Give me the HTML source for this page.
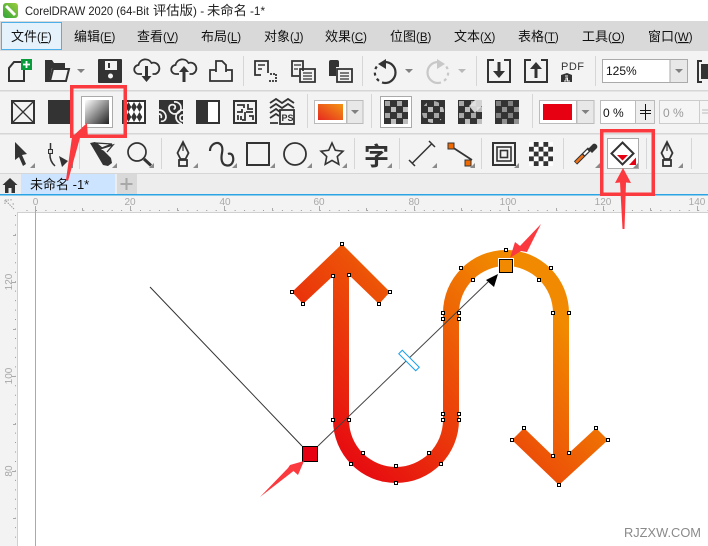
<!DOCTYPE html>
<html><head><meta charset="utf-8"><style>
html,body{margin:0;padding:0;background:#fff}
svg{display:block;position:absolute;left:0;top:0}
text{font-family:"Liberation Sans","Noto Sans CJK SC",sans-serif}
.l{font-size:11.500px}
.u{text-decoration:underline}
.h rect{width:3px;height:3px}
</style></head><body style="width:708px;height:546px;overflow:hidden;position:relative">
<svg width="708" height="546" viewBox="0 0 708 546" xmlns="http://www.w3.org/2000/svg">
<defs>
<linearGradient id="g" gradientUnits="userSpaceOnUse" x1="310" y1="454" x2="506" y2="265"><stop offset="0" stop-color="#e60012"/><stop offset="1" stop-color="#f18a00"/></linearGradient>
<linearGradient id="sw" x1="0" y1="1" x2="1" y2="0"><stop offset="0" stop-color="#e62a20"/><stop offset="1" stop-color="#f39412"/></linearGradient>
<linearGradient id="gr" x1="0" y1="0" x2="1" y2="1"><stop offset="0" stop-color="#fff"/><stop offset="1" stop-color="#222"/></linearGradient>
<linearGradient id="logo" x1="0" y1="1" x2="1" y2="0"><stop offset="0" stop-color="#2fa53a"/><stop offset="1" stop-color="#9ccc3c"/></linearGradient>
<pattern id="ck" width="12" height="12" patternUnits="userSpaceOnUse" x="384" y="100"><rect width="12" height="12" fill="#333"/><rect x="1" y="1" width="5" height="5" fill="#a8a8a8"/><rect x="7" y="7" width="5" height="5" fill="#bdbdbd"/></pattern>
<pattern id="ck2" width="12" height="12" patternUnits="userSpaceOnUse" x="421" y="100"><rect width="12" height="12" fill="#333"/><rect x="1" y="1" width="5" height="5" fill="#a8a8a8"/><rect x="7" y="7" width="5" height="5" fill="#bdbdbd"/></pattern>
<pattern id="ck3" width="12" height="12" patternUnits="userSpaceOnUse" x="458" y="100"><rect width="12" height="12" fill="#333"/><rect x="1" y="1" width="5" height="5" fill="#a8a8a8"/><rect x="7" y="7" width="5" height="5" fill="#bdbdbd"/></pattern>
<pattern id="ck4" width="12" height="12" patternUnits="userSpaceOnUse" x="495" y="100"><rect width="12" height="12" fill="#333"/><rect x="1" y="1" width="5" height="5" fill="#808080"/><rect x="7" y="7" width="5" height="5" fill="#909090"/></pattern>
<pattern id="ckw" width="9.600" height="9.600" patternUnits="userSpaceOnUse" x="529" y="142"><rect width="9.600" height="9.600" fill="#333"/><rect width="4.800" height="4.800" fill="#fff"/><rect x="4.800" y="4.800" width="4.800" height="4.800" fill="#fff"/></pattern>
<path id="tri" d="M0 0v-5h0l-5 5z" fill="#8a8a8a"/>
<path id="dd" d="M-4 0h8l-4 4z" fill="#808080"/>
</defs>

<rect width="708" height="546" fill="#fff"/>
<!-- title -->
<rect x="3" y="3" width="15" height="15" rx="3" fill="url(#logo)"/>
<path d="M6 6l9 9" stroke="#fff" stroke-width="3"/>
<g fill="#222">
<text x="25" y="15" font-size="11.800" textLength="124" lengthAdjust="spacingAndGlyphs">CorelDRAW 2020 (64-Bit</text>
<text x="153" y="15" font-size="13.300">评估版</text>
<text x="193" y="15" font-size="11.800">) -</text>
<text x="207" y="15" font-size="13.300">未命名</text>
<text x="250" y="15" font-size="11.800">-1*</text>
</g>
<!-- menu -->
<rect y="21" width="708" height="30" fill="#d9d9d9"/>
<rect x="1.500" y="22.500" width="60" height="27" fill="#e5f1fb" stroke="#4db0e8"/>
<g font-size="13" fill="#111">
<text x="11" y="41">文件<tspan class="l">(<tspan class="u">F</tspan>)</tspan></text>
<text x="74" y="41">编辑<tspan class="l">(<tspan class="u">E</tspan>)</tspan></text>
<text x="137" y="41">查看<tspan class="l">(<tspan class="u">V</tspan>)</tspan></text>
<text x="201" y="41">布局<tspan class="l">(<tspan class="u">L</tspan>)</tspan></text>
<text x="264" y="41">对象<tspan class="l">(<tspan class="u">J</tspan>)</tspan></text>
<text x="325" y="41">效果<tspan class="l">(<tspan class="u">C</tspan>)</tspan></text>
<text x="390" y="41">位图<tspan class="l">(<tspan class="u">B</tspan>)</tspan></text>
<text x="454" y="41">文本<tspan class="l">(<tspan class="u">X</tspan>)</tspan></text>
<text x="518" y="41">表格<tspan class="l">(<tspan class="u">T</tspan>)</tspan></text>
<text x="582" y="41">工具<tspan class="l">(<tspan class="u">O</tspan>)</tspan></text>
<text x="648" y="41">窗口<tspan class="l">(<tspan class="u">W</tspan>)</tspan></text>
</g>
<!-- toolbars bg -->
<rect y="51" width="708" height="123" fill="#f3f3f3"/>
<g fill="#d6d6d6">
<rect y="90" width="708" height="1.500"/><rect y="133" width="708" height="1.500"/><rect y="173" width="708" height="1"/>
<rect x="243" y="56" width="1" height="30"/><rect x="362" y="56" width="1" height="30"/><rect x="476" y="56" width="1" height="30"/><rect x="595" y="56" width="1" height="30"/>
<rect x="307" y="94" width="1" height="34"/><rect x="371" y="94" width="1" height="34"/><rect x="532" y="94" width="1" height="34"/>
<rect x="79" y="138" width="1" height="31"/><rect x="161" y="138" width="1" height="31"/><rect x="354" y="138" width="1" height="31"/><rect x="399" y="138" width="1" height="31"/><rect x="481" y="138" width="1" height="31"/><rect x="563" y="138" width="1" height="31"/><rect x="646" y="138" width="1" height="31"/><rect x="691" y="138" width="1" height="31"/>
</g>

<!-- ROW 1 -->
<path d="M21 62h-7l-5 6v13h15V70" fill="none" stroke="#333" stroke-width="2"/>
<rect x="21" y="59" width="11" height="11" fill="#0a9b3c"/><path d="M26.500 61v7M23 64.500h7" stroke="#fff" stroke-width="1.800"/>
<path d="M45 82V60h7l2 3h11v5H52l-3 14z" fill="#333"/><path d="M50 81l3-12h16l-3 12z" fill="none" stroke="#333" stroke-width="2"/><path d="M46 81h20" stroke="#333" stroke-width="2"/>
<use href="#dd" x="81" y="69"/>
<rect x="98" y="59" width="24" height="24" rx="1" fill="#333"/><rect x="105" y="61" width="12" height="9" fill="#f3f3f3"/><rect x="108" y="63" width="2" height="5" fill="#333"/><circle cx="110.500" cy="76" r="2.500" fill="#f3f3f3"/>
<g fill="none" stroke="#333" stroke-width="1.800">
<path d="M142 74h-3a4.500 4.500 0 0 1-.5-9 7 7 0 0 1 13-2 5.500 5.500 0 0 1 4 11h-3"/>
<path d="M179 74h-3a4.500 4.500 0 0 1-.5-9 7 7 0 0 1 13-2 5.500 5.500 0 0 1 4 11h-3"/>
<path d="M216 70h-6v11h22V70h-6M216 72V61h6l4 4v7"/>
</g>
<path d="M145 66h3v10h3.500l-5 6-5-6h3.500z" fill="#333"/>
<path d="M182.500 82h3V72h3.500l-5-6-5 6h3.500z" fill="#333"/>
<!-- doc icons -->
<g fill="none" stroke="#333" stroke-width="1.800">
<path d="M268 73V61h-13v14h6"/><path d="M258 65h7M258 69h4" stroke-width="1.400"/>
<path d="M270 74h6v7h-7" stroke-dasharray="2 1"/>
<path d="M303 71V61h-11v15h7" /><path d="M300 69h15v13h-15z"/><path d="M303 73h9M303 76h9M303 79h9" stroke-width="1.200"/><path d="M294 65h7M294 69h4" stroke-width="1.200"/>
<path d="M337 69h15v13h-15z"/><path d="M340 73h9M340 76h9M340 79h9" stroke-width="1.200"/>
</g>
<path d="M329 62q0-2 2-2h6q2 0 2 2v5h-3v9h-7z" fill="#333"/>
<!-- undo/redo -->
<g fill="none" stroke-width="2.200">
<path d="M385 62a10.500 10.500 0 0 1 0 21" stroke="#333"/>
<path d="M385 83a10.500 10.500 0 0 1-7-18" stroke="#333" stroke-dasharray="3 3.500"/>
<path d="M438 62a10.500 10.500 0 0 0 0 21" stroke="#c8c8c8"/>
<path d="M438 83a10.500 10.500 0 0 0 7-18" stroke="#c8c8c8" stroke-dasharray="3 3.500"/>
</g>
<path d="M386 59v10l-8-5z" fill="#333"/><path d="M437 59v10l8-5z" fill="#c8c8c8"/>
<use href="#dd" x="409" y="69"/><use href="#dd" x="462" y="69" style="opacity:.5"/>
<!-- import/export -->
<g fill="none" stroke="#333" stroke-width="2">
<path d="M494 60h-6v22h22V60h-6M531 60h-6v22h22V60h-6"/>
</g>
<path d="M497.500 62h3v9h4.500l-6 7-6-7h4.500z" fill="#333"/><path d="M534.500 78h3v-9h4.500l-6-7-6 7h4.500z" fill="#333"/>
<text x="561" y="70" font-size="11" fill="#333" style="letter-spacing:.5px">PDF</text>
<path d="M561 75l6-2 5 2v7h-11z" fill="#333"/><path d="M564 81h2v-3h1.500v3H570M565 76h3" stroke="#f3f3f3" fill="none" stroke-width="1"/>
<!-- zoom combo -->
<rect x="602.500" y="59.500" width="85" height="23" fill="#fff" stroke="#aaa"/><rect x="670" y="60" width="17" height="22" fill="#e8e8e8"/><path d="M670 60v22" stroke="#aaa"/>
<text x="606" y="75" font-size="12" fill="#111">125%</text><use href="#dd" x="679" y="69"/>
<path d="M702 61h-4v21h4" fill="none" stroke="#333" stroke-width="2"/><rect x="701" y="64" width="7" height="15" fill="#333"/>

<!-- ROW 2 -->
<rect x="12" y="101" width="22" height="22" fill="none" stroke="#333" stroke-width="2"/><path d="M13 102l20 20M33 102l-20 20" stroke="#333" stroke-width="1.300"/>
<rect x="48" y="100" width="24" height="24" fill="#333"/>
<rect x="81.500" y="96.500" width="31" height="31" fill="#fff" stroke="#aaa"/><rect x="85" y="100" width="24" height="24" fill="url(#gr)"/>
<!-- two colour -->
<rect x="123" y="101" width="22" height="22" fill="#fff" stroke="#333" stroke-width="2"/>
<path d="M128.500 102l2.800 5-2.800 5-2.800-5zM134 102l2.800 5-2.800 5-2.800-5zM139.500 102l2.800 5-2.800 5-2.800-5zM128.500 112l2.800 5-2.800 5-2.800-5zM134 112l2.800 5-2.800 5-2.800-5zM139.500 112l2.800 5-2.800 5-2.800-5z" fill="#333"/>
<!-- swirl -->
<rect x="159" y="100" width="24" height="24" fill="#333"/>
<g fill="none" stroke="#f3f3f3" stroke-width="1.700"><path d="M174 102a6 6 0 1 1-5 6c0-3 3-4 5-3s1.500 4-.5 4"/><path d="M159 110a7 7 0 0 1 7 7c0 3-3 5-5 4M159 114c2 0 3 2 2 4"/><path d="M183 110a7 7 0 0 0-7 7c0 4 3 6 6 7M183 115c-2 0-3 1-3 3s1 3 3 3"/></g>
<!-- half -->
<rect x="197" y="101" width="22" height="22" fill="#fff" stroke="#333" stroke-width="2"/><rect x="196" y="100" width="12" height="24" fill="#333"/>
<!-- maze -->
<rect x="234" y="101" width="22" height="22" fill="#f3f3f3" stroke="#333" stroke-width="2"/>
<path d="M237 105h7v3M248 104v5h5M237 112h5v-3M246 112h7M241 116v4M245 112v8h-3M249 116h4v4M237 116h1v4" fill="none" stroke="#333" stroke-width="1.800"/>
<!-- PS -->
<path d="M270 103l6-4 6 4 6-4 6 4M270 108l6-4 6 4 6-4 6 4M270 113l6-4 4 3M270 118l6-4 3 2M270 123h8" fill="none" stroke="#333" stroke-width="1.800"/>
<rect x="280" y="110" width="14" height="14" fill="#f3f3f3" stroke="#333" stroke-width="1.800"/>
<text x="281.500" y="121" font-size="9" font-weight="700" fill="#333">PS</text>
<!-- gradient swatch -->
<rect x="314.500" y="100.500" width="32" height="23" fill="#fff" stroke="#bbb"/><rect x="318" y="104" width="25" height="16" fill="url(#sw)"/>
<rect x="347" y="100.500" width="16" height="23" fill="#e8e8e8" stroke="#bbb"/><use href="#dd" x="355" y="110"/>
<!-- transparency types -->
<rect x="380.500" y="96.500" width="31" height="31" fill="#fff" stroke="#aaa"/>
<rect x="384" y="100" width="24" height="24" fill="url(#ck)"/>
<rect x="421" y="100" width="24" height="24" fill="#333"/><circle cx="433" cy="112" r="11" fill="url(#ck2)"/>
<rect x="458" y="100" width="24" height="24" fill="url(#ck3)"/><path d="M482 100v6l-7 7-6-7 6-6z" fill="#e4e4e4" opacity=".9"/>
<rect x="495" y="100" width="24" height="24" fill="url(#ck4)"/>
<!-- red swatch -->
<rect x="539.500" y="100.500" width="37" height="23" fill="#fff" stroke="#bbb"/><rect x="543" y="104" width="29" height="16" fill="#e60012"/>
<rect x="577" y="100.500" width="17" height="23" fill="#e8e8e8" stroke="#bbb"/><use href="#dd" x="585.500" y="110"/>
<!-- 0% -->
<rect x="600.500" y="100.500" width="54" height="23" fill="#fff" stroke="#bbb"/><rect x="636" y="101" width="18" height="22" fill="#eee"/><path d="M635.500 101v22" stroke="#bbb"/>
<text x="603" y="117" font-size="12" fill="#111">0 %</text>
<path d="M645.500 104v16M640 110.500h11M640 113.500h11" stroke="#111" fill="none"/>
<rect x="659.500" y="100.500" width="60" height="23" fill="#f5f5f5" stroke="#ccc"/><path d="M699.500 101v22" stroke="#ccc"/>
<text x="663" y="117" font-size="12" fill="#999">0 %</text>
<path d="M702 110h6M702 113h6" stroke="#bbb"/>

<!-- ROW 3 -->
<path d="M15 142l12 12-5 1 4 9-3 2-4-9-4 3z" fill="#333"/><use href="#tri" x="35" y="168"/>
<rect x="48.500" y="149.500" width="4" height="4" fill="#ddd" stroke="#333"/>
<path d="M50.500 143v6M50 154q-.5 7 5 12" fill="none" stroke="#333" stroke-width="1.500"/>
<path d="M59 156l9 5-6 6z" fill="#333"/><use href="#tri" x="73" y="168"/>
<path d="M90 143l5-1 16 16 1 5-4 3-5-1z" fill="#333"/><path d="M96 143l16 1-10 4zM100 149l13-4-6 7" fill="#f3f3f3" stroke="#333" stroke-width="1.300"/><use href="#tri" x="117" y="168"/>
<circle cx="137" cy="152" r="9" fill="none" stroke="#333" stroke-width="1.700"/><path d="M144 159l7 6.500" stroke="#333" stroke-width="3"/><use href="#tri" x="154" y="168"/>
<!-- pen -->
<g fill="none" stroke="#333" stroke-width="1.800">
<path d="M183 142l-5.500 11 3 6h5l3-6z"/><path d="M183 143v8" stroke-width="1.200"/><rect x="179" y="160" width="8" height="6"/>
<path d="M210 151C210 145 215 142.500 218 143C222 144 223 148 222 153C221 158 221 165 227 165.500C232 166 234 161 233 157C232.500 154 230 153 228 154" stroke-width="2.200"/>
<rect x="247" y="143" width="22" height="22" stroke-width="2"/>
<circle cx="295" cy="154" r="11" stroke-width="1.800"/>
<path d="M332 143l3.300 7.300 7.700.9-5.700 5.300 1.500 7.800-6.800-3.900-6.800 3.900 1.500-7.800-5.700-5.300 7.700-.9z" stroke-width="1.600"/>
</g>
<use href="#tri" x="198" y="168"/><use href="#tri" x="237" y="168"/><use href="#tri" x="275" y="168"/><use href="#tri" x="312" y="168"/><use href="#tri" x="347" y="168"/>
<!-- text -->
<text x="364" y="165" font-size="25" font-weight="700" fill="#333" style="font-family:'Noto Sans CJK SC',sans-serif">字</text><use href="#tri" x="392" y="168"/>
<!-- dimension -->
<path d="M412.500 163l19.500-19.500M409 160l6 6M429 141l6 6" stroke="#333" stroke-width="1.500"/><use href="#tri" x="437" y="168"/>
<path d="M452 147l20 13" stroke="#333" stroke-width="1.800"/><rect x="448" y="143" width="6" height="6" fill="#f06a00" stroke="#333"/><rect x="465" y="160" width="6" height="6" fill="#f06a00" stroke="#333"/><use href="#tri" x="475" y="168"/>
<!-- contour -->
<g fill="none" stroke="#333" stroke-width="1.600"><rect x="493" y="143" width="22" height="22" stroke-width="2"/><rect x="497" y="147" width="14" height="14"/><rect x="500.500" y="150.500" width="7" height="7"/></g><use href="#tri" x="519" y="168"/>
<rect x="529" y="142" width="24" height="24" fill="url(#ckw)"/>
<!-- eyedropper -->
<path d="M575.500 163l14-14" stroke="#333" stroke-width="4.500"/><path d="M576 162.500l7-7" stroke="#f07018" stroke-width="2.600"/><path d="M584 154.500l4-4" stroke="#fff" stroke-width="2"/><path d="M588 149l5-5a3 3 0 0 1 4 4l-5 5z" fill="#333"/><use href="#tri" x="600" y="168"/>
<!-- fill tool selected -->
<rect x="607.500" y="138.500" width="31" height="30" fill="#fff" stroke="#aaa"/>
<path d="M622.500 142.500l11 11-11 11-11-11z" fill="none" stroke="#333" stroke-width="2"/>
<path d="M617 155h11l-5.500 5.500z" fill="#e60012"/><path d="M629 165l7-7.500V165z" fill="#e60012"/><use href="#tri" x="638" y="168"/>
<g fill="none" stroke="#333" stroke-width="1.800"><path d="M667 142l-5.500 11 3 6h5l3-6z"/><path d="M667 143v8" stroke-width="1.200"/><rect x="663" y="160" width="8" height="6"/></g><use href="#tri" x="683" y="168"/>

<!-- tab strip -->
<rect y="174" width="708" height="20" fill="#ededed"/>
<path d="M10 178l7.500 7H15v8h-3.500v-5h-3v5H5v-8H2.500z" fill="#333"/>
<rect x="21" y="174" width="94" height="20" fill="#cce4ff"/>
<text x="30" y="189" font-size="13" fill="#111">未命名 -1*</text>
<rect x="117" y="174" width="20" height="20" fill="#d9d9d9"/><path d="M126.500 178v12M120.500 184h12" stroke="#a8a8a8" stroke-width="2"/>
<rect y="194" width="708" height="1.500" fill="#2aa4e4"/>

<!-- rulers -->
<rect y="195.500" width="708" height="351" fill="#f3f3f3"/>
<rect x="17" y="212" width="691" height="334" fill="#fff"/>
<path d="M17 212.500h691M17.500 212v334" stroke="#d0d0d0"/>
<path d="M35.500 206v340" stroke="#aaa" fill="none"/>
<path d="M5 200h4M5 200v4M6 201l8 8M11 199v2M14 204h-2" stroke="#999" fill="none" stroke-dasharray="1.500 1"/>
<g font-size="10" fill="#a8a8a8" text-anchor="middle"><text x="35.500" y="205">0</text><text x="130" y="205">20</text><text x="225" y="205">40</text><text x="319" y="205">60</text><text x="414" y="205">80</text><text x="508" y="205">100</text><text x="603" y="205">120</text><text x="697" y="205">140</text>
<text transform="translate(12 282) rotate(-90)">120</text><text transform="translate(12 376) rotate(-90)">100</text><text transform="translate(12 471) rotate(-90)">80</text></g>
<path d="M26 210.500H708" stroke="#9a9a9a" stroke-dasharray="1 8.460" stroke-dashoffset="-0.500"/>
<path d="M82.500 208v3M130.500 206v5M177.500 208v3M224.500 206v5M272.500 208v3M319.500 206v5M366.500 208v3M414.500 206v5M461.500 208v3M508.500 206v5M556.500 208v3M603.500 206v5M650.500 208v3M697.500 206v5" stroke="#aaa"/>
<path d="M15.500 215V546" stroke="#9a9a9a" stroke-dasharray="1 8.460"/>
<path d="M13 235.500h3M12 282.500h4M13 329.500h3M12 376.500h4M13 424.500h3M12 471.500h4M13 518.500h3" stroke="#aaa"/>

<!-- shape -->
<path d="M342 244L390 292L379 304L349 275V420A47 47 0 0 0 443 420V313A63 63 0 0 1 569 313V453L596 428L608 440L559 485L512 440L524 428L553 456V313A47 47 0 0 0 459 313V420A63 63 0 0 1 333 420V276L303 304L292 292z" fill="url(#g)"/>
<path d="M150 287L302 446" stroke="#333" stroke-width="1" fill="none"/>
<path d="M318 446L488 282" stroke="#444" stroke-width="1" fill="none"/>
<path d="M498 274L486 280L494 287z" fill="#000"/>
<rect x="397" y="358" width="24" height="5" transform="rotate(45 409 360.500)" fill="#fff" stroke="#18a0f0" stroke-width="1"/>
<g class="h" fill="#fff" stroke="#000" stroke-width="1" transform="translate(.5 .5)">
<rect x="340" y="242" width="3" height="3"/><rect x="331" y="274" width="3" height="3"/><rect x="347" y="273" width="3" height="3"/><rect x="290" y="290" width="3" height="3"/><rect x="301" y="302" width="3" height="3"/><rect x="377" y="302" width="3" height="3"/><rect x="388" y="290" width="3" height="3"/>
<rect x="459" y="266" width="3" height="3"/><rect x="471" y="278" width="3" height="3"/><rect x="504" y="248" width="3" height="3"/><rect x="549" y="266" width="3" height="3"/><rect x="537" y="278" width="3" height="3"/>
<rect x="441" y="311" width="3" height="3"/><rect x="457" y="311" width="3" height="3"/><rect x="441" y="317" width="3" height="3"/><rect x="457" y="317" width="3" height="3"/><rect x="551" y="311" width="3" height="3"/><rect x="567" y="311" width="3" height="3"/>
<rect x="441" y="412" width="3" height="3"/><rect x="457" y="412" width="3" height="3"/><rect x="441" y="418" width="3" height="3"/><rect x="457" y="418" width="3" height="3"/><rect x="331" y="418" width="3" height="3"/><rect x="347" y="418" width="3" height="3"/>
<rect x="361" y="451" width="3" height="3"/><rect x="427" y="451" width="3" height="3"/><rect x="349" y="462" width="3" height="3"/><rect x="439" y="462" width="3" height="3"/><rect x="394" y="464" width="3" height="3"/><rect x="394" y="481" width="3" height="3"/>
<rect x="522" y="426" width="3" height="3"/><rect x="594" y="426" width="3" height="3"/><rect x="510" y="438" width="3" height="3"/><rect x="606" y="438" width="3" height="3"/><rect x="551" y="454" width="3" height="3"/><rect x="567" y="451" width="3" height="3"/><rect x="557" y="483" width="3" height="3"/>
</g>
<rect x="302.500" y="446.500" width="15" height="15" fill="#e60012" stroke="#000" stroke-width="1"/>
<rect x="498" y="258" width="16" height="16" fill="#fff"/>
<rect x="499.500" y="259.500" width="13" height="13" fill="#f18a00" stroke="#000" stroke-width="1"/>

<!-- annotations -->
<g fill="none" stroke="#fb3a3f" stroke-width="3.500">
<rect x="71.750" y="86.750" width="53.500" height="49.500"/>
<rect x="601.750" y="130.750" width="51.500" height="63.500"/>
</g>
<g fill="#fb3a3f">
<path d="M87 123L88 138L80.500 136L68 181L66 180L72 137z"/>
<path d="M623 168L631 183L626 182.500L624.500 229L622.500 229L620 182.500L615 183z"/>
<path d="M510 258L515 242L520 246L541 224L527 252L521 251z"/>
<path d="M304 461L298 475L293.500 471L260 497L288 468L290 465z"/>
</g>
<text x="624" y="537" font-size="13" fill="#8a8a8a" textLength="77" lengthAdjust="spacingAndGlyphs">RJZXW.COM</text>
</svg>
</body></html>
